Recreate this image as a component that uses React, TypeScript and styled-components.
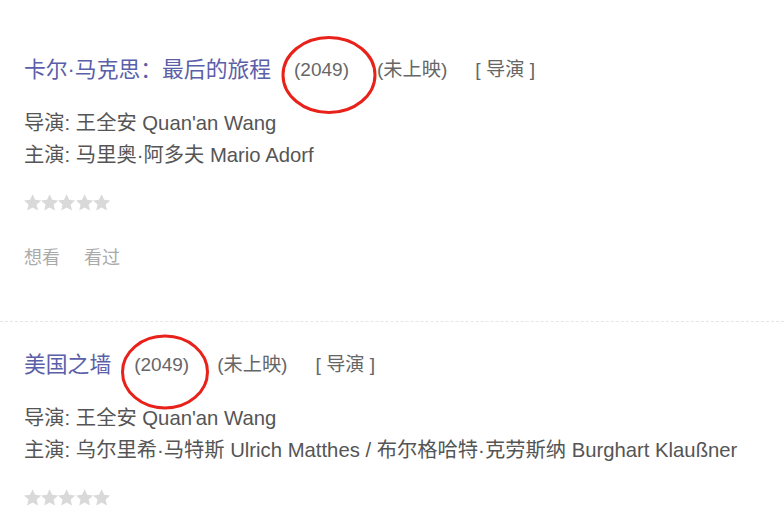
import styled, { createGlobalStyle } from 'styled-components'

const GlobalStyle = createGlobalStyle`
    body {
        margin: 0;
        background: #fff;
        font-family: 'Liberation Sans', Arial, 'Noto Sans CJK SC', sans-serif;
    }
`

type Movie = {
    title: string
    year: string
    director: string
    cast: string
    mark: { dx: number, dy: number, w: number, h: number }
}

const movies: Movie[] = [
    {
        title: '卡尔·马克思：最后的旅程',
        year: '(2049)',
        director: "王全安 Quan'an Wang",
        cast: '马里奥·阿多夫 Mario Adorf',
        mark: { dx: 8, dy: 5, w: 96, h: 79 },
    },
    {
        title: '美国之墙',
        year: '(2049)',
        director: "王全安 Quan'an Wang",
        cast: '乌尔里希·马特斯 Ulrich Matthes / 布尔格哈特·克劳斯纳 Burghart Klaußner',
        mark: { dx: 3, dy: 7, w: 89, h: 76 },
    },
]

const Stars = () => (
    <StarRow>
        {[0, 1, 2, 3, 4].map(i => (
            <svg key={i} width='17.2' height='17' viewBox='1 1 22 21'>
                <path d='M12 1l3.3 7.1 7.7.8-5.8 5.2 1.7 7.6L12 17.8l-6.9 3.9 1.7-7.6L1 8.9l7.7-.8z' fill='#d9d9d9' />
            </svg>
        ))}
    </StarRow>
)

const Circle = ({ mark }: { mark: Movie['mark'] }) => (
    <Mark
        width={mark.w}
        height={mark.h}
        style={{ left: `calc(50% + ${mark.dx}px)`, top: `calc(50% + ${mark.dy}px)` }}
    >
        <ellipse cx={mark.w / 2} cy={mark.h / 2} rx={mark.w / 2 - 2} ry={mark.h / 2 - 2} fill='none' stroke='#e8221b' strokeWidth='3' />
    </Mark>
)

const MovieItem = ({ movie, last }: { movie: Movie, last?: boolean }) => (
    <Item $last={last}>
        <TitleRow>
            <Title href='#'>{movie.title}</Title>
            <Year>
                {movie.year}
                <Circle mark={movie.mark} />
            </Year>
            <Meta>(未上映)</Meta>
            <Meta>[ 导演 ]</Meta>
        </TitleRow>
        <Info>
            <Line>导演: {movie.director}</Line>
            <Line>主演: {movie.cast}</Line>
        </Info>
        <Stars />
        {!last && (
            <Actions>
                <Action>想看</Action>
                <Action>看过</Action>
            </Actions>
        )}
    </Item>
)

export default function App() {
    return (
        <>
            <GlobalStyle />
            <List>
                {movies.map((m, i) => (
                    <MovieItem key={i} movie={m} last={i === movies.length - 1} />
                ))}
            </List>
        </>
    )
}

const List = styled.div`
    width: 784px;
    height: 514px;
    overflow: hidden;
    padding-top: 27px;
    box-sizing: border-box;
`

const Item = styled.div<{ $last?: boolean }>`
    padding: 29px 24px ${p => (p.$last ? '0' : '49px')};
    border-bottom: ${p => (p.$last ? 'none' : '1px dashed #e6e6e6')};
`

const TitleRow = styled.div`
    display: flex;
    align-items: center;
    gap: 28px;
    height: 28px;
    line-height: 28px;
`

const Title = styled.a`
    color: #5b5ea8;
    font-size: 21.8px;
    text-decoration: none;
    margin-right: -5px;
`

const Year = styled.span`
    position: relative;
    color: #666;
    font-size: 19px;
`

const Mark = styled.svg`
    position: absolute;
    transform: translate(-50%, -50%);
    pointer-events: none;
`

const Meta = styled.span`
    color: #666;
    font-size: 19.2px;
`

const Info = styled.div`
    margin-top: 23px;
`

const Line = styled.div`
    color: #555;
    font-size: 20.3px;
    line-height: 32px;
`

const StarRow = styled.div`
    display: flex;
    margin-top: 23px;
    height: 17px;
`

const Actions = styled.div`
    display: flex;
    gap: 24px;
    margin-top: 33px;
    line-height: 28px;
`

const Action = styled.span`
    color: #aaa;
    font-size: 18px;
`
